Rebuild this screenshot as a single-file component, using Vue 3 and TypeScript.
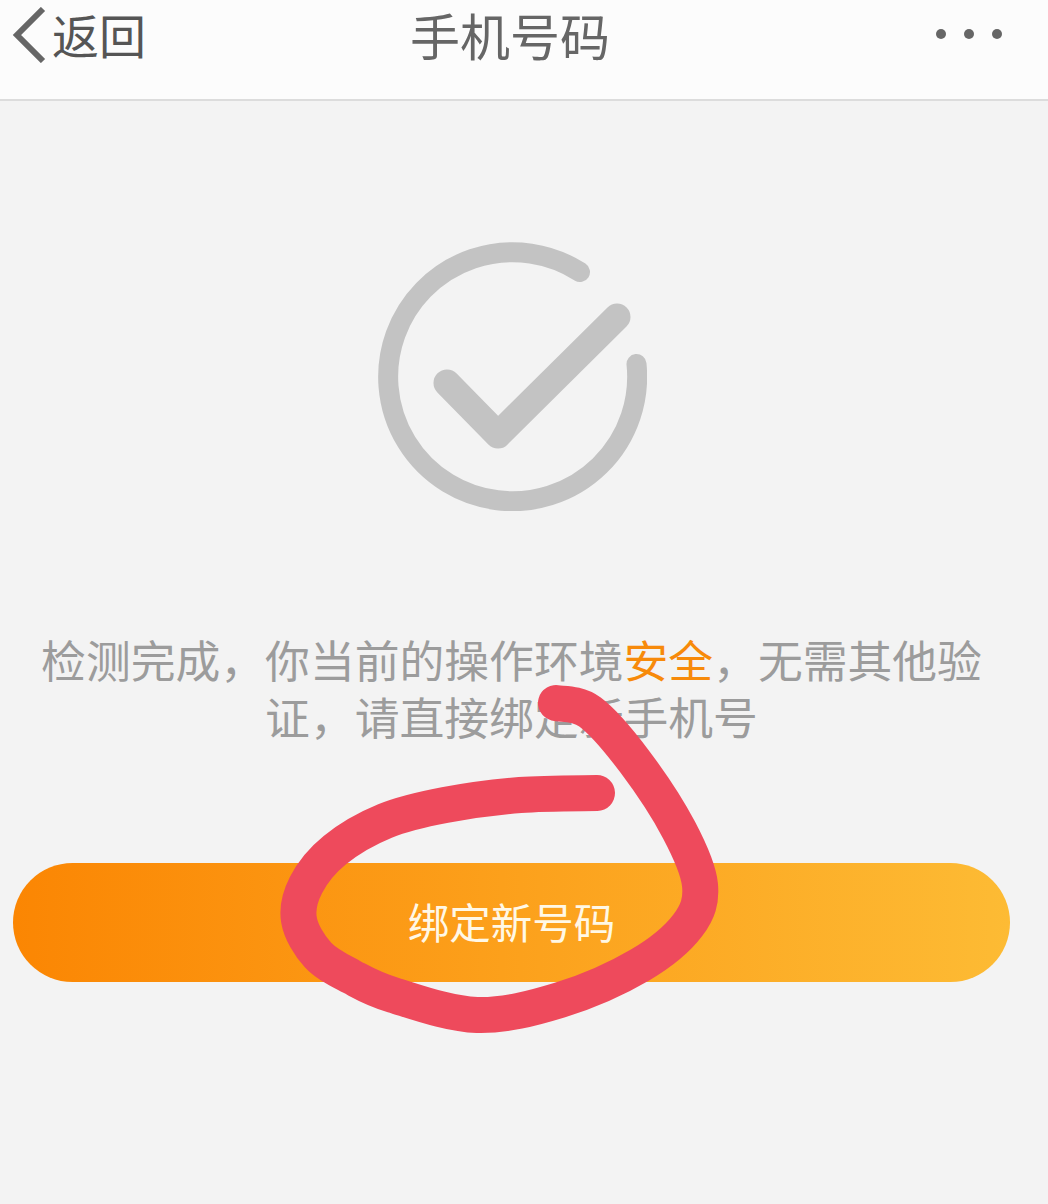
<script setup lang="ts">
type Pt = [number, number];
const pts: Pt[] = [
  [597, 793], [520, 795], [445, 805], [385, 821], [335, 850], [306, 885], [299, 920], [318, 955],
  [352, 977], [393, 995], [477, 1015], [560, 1000], [640, 965], [688, 925], [700, 885], [679, 830],
  [635, 762], [590, 712], [556, 703],
];
function smooth(p: Pt[]): string {
  let d = `M${p[0][0]} ${p[0][1]}`;
  for (let i = 0; i < p.length - 1; i++) {
    const a = p[Math.max(i - 1, 0)], b = p[i], c = p[i + 1], e = p[Math.min(i + 2, p.length - 1)];
    const c1x = b[0] + (c[0] - a[0]) / 6, c1y = b[1] + (c[1] - a[1]) / 6;
    const c2x = c[0] - (e[0] - b[0]) / 6, c2y = c[1] - (e[1] - b[1]) / 6;
    d += ` C${c1x.toFixed(1)} ${c1y.toFixed(1)} ${c2x.toFixed(1)} ${c2y.toFixed(1)} ${c[0]} ${c[1]}`;
  }
  return d;
}
const scribble = smooth(pts);
</script>

<template>
  <div class="page">
    <header class="bar">
      <div class="back">
        <svg class="chev" width="34" height="56" viewBox="0 0 34 56">
          <path d="M31 2 L5 28 L31 54" fill="none" stroke="#666" stroke-width="6" />
        </svg>
        <span class="back-text">返回</span>
      </div>
      <h1 class="title">手机号码</h1>
      <div class="dots"><i></i><i></i><i></i></div>
    </header>

    <main class="main">
      <svg class="check" width="270" height="270" viewBox="377 241 270 270">
        <path d="M580 272 A124.5 124.5 0 1 0 636.5 364" fill="none" stroke="#c3c3c3" stroke-width="20" stroke-linecap="round" />
        <path d="M447 383 L498 435 L617 317" fill="none" stroke="#c3c3c3" stroke-width="27" stroke-linecap="round" stroke-linejoin="round" />
      </svg>
      <p class="msg">检测完成，你当前的操作环境<span class="safe">安全</span>，无需其他验证，请直接绑定新手机号</p>
      <button class="cta">绑定新号码</button>
    </main>

    <svg class="scribble" width="1048" height="1204" viewBox="0 0 1048 1204">
      <path :d="scribble" fill="none" stroke="#ee4a5c" stroke-width="36" stroke-linecap="round" stroke-linejoin="round" />
    </svg>
  </div>
</template>

<style scoped>
.page {
  position: relative;
  width: 1048px;
  height: 1204px;
  overflow: hidden;
  background: #f3f3f3;
  font-family: "Noto Sans CJK SC", "Liberation Sans", sans-serif;
}
.bar {
  height: 101px;
  box-sizing: border-box;
  background: #fcfcfc;
  border-bottom: 2px solid #dcdcdc;
  display: grid;
  grid-template-columns: 1fr auto 1fr;
  grid-template-rows: 64px;
  padding: 2px 46px 33px 12px;
  align-items: center;
}
.back {
  display: flex;
  align-items: center;
  gap: 6px;
  height: 64px;
}
.chev {
  flex: none;
  margin-top: 2px;
}
.back-text {
  font-size: 47px;
  line-height: 64px;
  color: #555;
}
.title {
  margin: 0 0 0 6px;
  font-size: 50px;
  font-weight: 400;
  line-height: 64px;
  color: #666;
}
.dots {
  display: flex;
  justify-content: flex-end;
  gap: 18px;
}
.dots i {
  width: 10px;
  height: 10px;
  border-radius: 50%;
  background: #666;
}
.main {
  display: flex;
  flex-direction: column;
  align-items: center;
  padding: 140px 38px 0 13px;
}
.check {
  display: block;
}
.msg {
  width: 960px;
  margin: 119px 0 0 0;
  text-align: center;
  font-size: 44.8px;
  line-height: 57px;
  color: #9c9c9c;
}
.safe {
  color: #f78a0a;
}
.cta {
  width: 997px;
  height: 119px;
  margin-top: 119px;
  border: 0;
  border-radius: 60px;
  padding: 0 0 4px;
  background: linear-gradient(90deg, #fb8603, #fdbb34);
  color: #fff8e6;
  font-family: inherit;
  font-size: 41.5px;
}
.scribble {
  position: absolute;
  left: 0;
  top: 0;
  pointer-events: none;
}
</style>
